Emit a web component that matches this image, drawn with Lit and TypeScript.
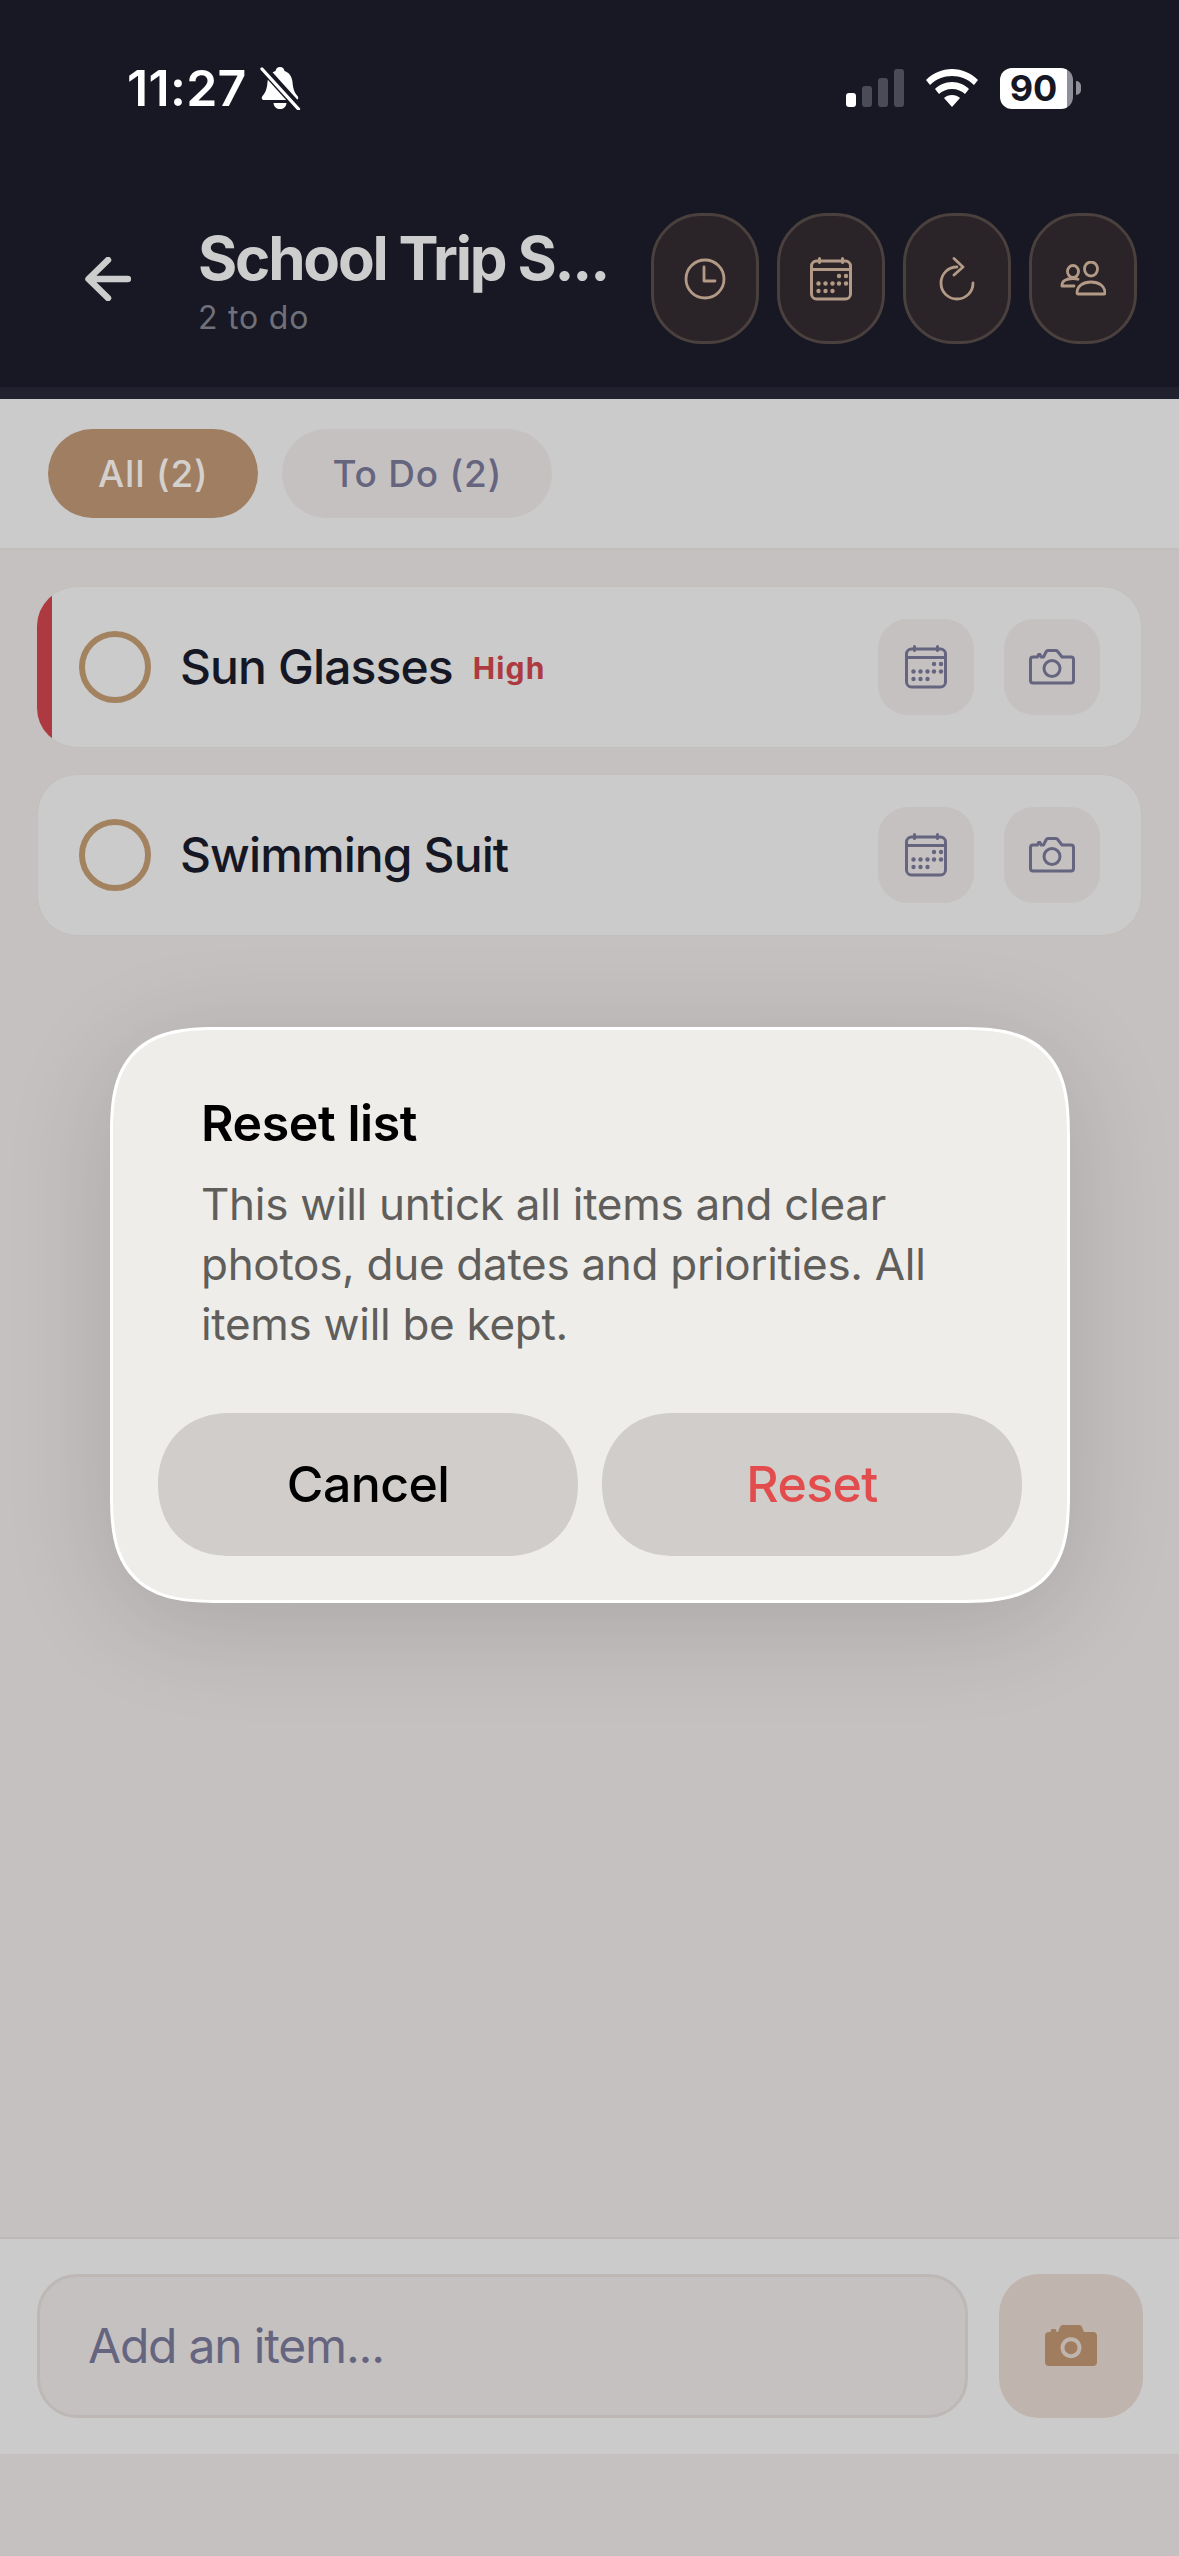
import { LitElement, html, css, svg } from "lit";
import { customElement } from "lit/decorators.js";

const calendar = (c: string) => html`<svg class="ic-cal" viewBox="0 0 42 44" fill="none" stroke=${c} stroke-width="3" stroke-linecap="round">
  <path d="M9.500 1.500v4M32.500 1.500v4"/>
  <rect x="1.500" y="4" width="39" height="38" rx="5"/>
  <path d="M1.500 12.500h39"/>
  ${[[29,19],[36,19],[8.500,26.500],[15.500,26.500],[22.500,26.500],[29,26.500],[36,26.500],[8.500,34],[15.500,34],[22.500,34]].map(([x,y]) => svg`<circle cx=${x} cy=${y} r="2.200" fill=${c} stroke="none"/>`)}
</svg>`;

const camera = (c: string) => html`<svg class="ic-cam" viewBox="0 0 46 36" fill="none" stroke=${c} stroke-width="3" stroke-linejoin="round" stroke-linecap="round">
  <path d="M4 8h4.500l1-2.500h1.500l1 2.500h2.500l2.800-5.500q.5-1 1.700-1h8q1.200 0 1.700 1L33 8h9q2.500 0 2.500 2.500v21q0 2.500-2.500 2.500H4q-2.500 0-2.500-2.500v-21Q1.500 8 4 8z"/>
  <circle cx="23" cy="19.500" r="8"/>
</svg>`;

@customElement("app-root")
export class AppRoot extends LitElement {
  static styles = css`
    :host { display: block; font-family: Inter, "Noto Sans", sans-serif; }
    * { box-sizing: border-box; }
    .app { position: relative; width: 1179px; height: 2556px; background: #c5c1c0; display: flex; flex-direction: column; overflow: hidden; }

    .header { background: #171823; height: 399px; border-bottom: 12px solid #20202e; flex: none; }
    .status { height: 213px; padding: 62px 98px 0 127px; display: flex; align-items: flex-start; }
    .time { color: #fff; font-size: 50px; font-weight: 600; line-height: 52px; letter-spacing: .3px; }
    .bell { width: 42px; height: 44px; margin: 4px 0 0 12px; }
    .right { margin-left: auto; display: flex; align-items: center; height: 52px; }
    .signal { width: 58px; height: 38px; }
    .wifi { width: 52px; height: 38px; margin-left: 22px; }
    .batt { position: relative; width: 73px; height: 41px; margin-left: 22px; border-radius: 12px; background: linear-gradient(90deg, #fff 0 67px, #8f8f99 67px); color: #161724; font-size: 36px; font-weight: 700; line-height: 41px; text-align: center; padding-right: 6px; }
    .nub { width: 5px; height: 14px; background: #8f8f99; border-radius: 0 7px 7px 0; margin-left: 3px; }

    .bar { height: 131px; display: flex; align-items: center; padding-right: 42px; }
    .back { width: 198px; flex: none; padding-left: 85px; display: flex; }
    .back svg { width: 46px; height: 44px; }
    .titles { flex: 1; min-width: 0; margin-top: 3px; }
    .title { color: #cdcdcd; font-size: 60px; font-weight: 700; line-height: 70px; letter-spacing: -2.200px; white-space: nowrap; }
    .sub { color: #6f7079; font-size: 32px; line-height: 40px; letter-spacing: .8px; margin-top: 5px; }
    .hbtns { display: flex; gap: 18px; flex: none; }
    .hbtn { width: 108px; height: 131px; border-radius: 50px; background: #2a2428; border: 3px solid #4a403d; display: flex; align-items: center; justify-content: center; }
    .hbtn svg { display: block; }
    .ic-clock { width: 42px; height: 42px; }
    .hbtn .ic-cal { width: 42px; height: 44px; }
    .ic-redo { width: 36px; height: 44px; }
    .ic-people { width: 46px; height: 36px; }

    .filters { flex: none; height: 151px; background: #cbcbcb; border-bottom: 2px solid #c3bfbe; padding: 30px 48px 0; display: flex; gap: 24px; align-items: flex-start; }
    .chip { height: 89px; border-radius: 45px; font-size: 37px; font-weight: 500; line-height: 89px; letter-spacing: .8px; padding: 0 50px; background: #c5c1c0; color: #666580; }
    .chip.on { background: #a07e61; color: #d4d0cd; }

    .list { flex: 1; padding: 36px 37px 0; display: flex; flex-direction: column; gap: 26px; }
    .card { height: 162px; background: #cbcbcb; border: 1px solid #c2bfbd; border-radius: 40px; display: flex; align-items: center; padding: 0 41px; overflow: hidden; }
    .card.high { border-left: 0; padding-left: 0; }
    .strip { width: 15px; align-self: stretch; margin: -1px 27px -1px 0; background: #ad3a40; flex: none; }
    .circle { width: 72px; height: 72px; border: 6px solid #a3825f; border-radius: 50%; flex: none; }
    .name { color: #161724; font-size: 48px; font-weight: 500; line-height: 60px; margin-left: 29px; letter-spacing: -.9px; }
    .prio { color: #ad3a40; font-size: 30px; font-weight: 700; letter-spacing: 1.200px; margin-left: 20px; margin-top: 2px; }
    .acts { margin-left: auto; display: flex; gap: 30px; }
    .act { width: 96px; height: 96px; border-radius: 30px; background: #c5c1c0; display: flex; align-items: center; justify-content: center; }
    .act .ic-cal { width: 42px; height: 44px; }
    .ic-cam { width: 46px; height: 36px; }

    .composer { flex: none; height: 217px; background: #cbcbcb; border-top: 2px solid #bdb9b7; padding: 35px 36px 0 37px; display: flex; justify-content: space-between; }
    .input { width: 931px; height: 144px; background: #c5c1c0; border: 3px solid #bdb8b5; border-radius: 40px; color: #666580; font-size: 48px; line-height: 138px; padding-left: 48px; letter-spacing: -1.200px; }
    .cbtn { width: 144px; height: 144px; border-radius: 40px; background: #c0b5ae; display: flex; align-items: center; justify-content: center; }
    .cbtn svg { width: 54px; height: 42px; }
    .foot { flex: none; height: 102px; }

    .dialog { position: absolute; left: 110px; top: 1027px; width: 960px; height: 576px; background: #eeedea; border: 3px solid #fff; border-radius: 110px; corner-shape: superellipse(1.5); padding: 64px 45px 0; box-shadow: 0 20px 110px rgba(0,0,0,.14); }
    .dtitle { color: #000; font-size: 50px; font-weight: 600; line-height: 58px; letter-spacing: -.4px; padding-left: 43px; }
    .dbody { color: #5f5e5b; font-size: 44px; line-height: 60px; padding-left: 43px; margin-top: 22px; letter-spacing: -.3px; }
    .dbtns { display: flex; gap: 24px; margin-top: 59px; }
    .dbtn { width: 420px; height: 143px; border-radius: 72px; corner-shape: superellipse(1.1); background: #d0cdca; color: #000; font-size: 50px; font-weight: 500; line-height: 143px; text-align: center; letter-spacing: -.6px; }
    .dbtn.red { color: #e34c4c; }
  `;

  private item(name: string, high: boolean) {
    return html`<div class="card ${high ? "high" : ""}">
      ${high ? html`<div class="strip"></div>` : ""}
      <div class="circle"></div>
      <div class="name">${name}</div>
      ${high ? html`<div class="prio">High</div>` : ""}
      <div class="acts">
        <div class="act">${calendar("#666580")}</div>
        <div class="act">${camera("#666580")}</div>
      </div>
    </div>`;
  }

  render() {
    const tan = "#b39a86";
    return html`<div class="app">
      <div class="header">
        <div class="status">
          <div class="time">11:27</div>
          <svg class="bell" viewBox="0 0 42 44">
            <path fill="#fff" d="M21 1c2.500 0 4 1.500 4.500 4 5 1.500 7.500 6 8 11 .5 6 1.500 10 5 14 1.500 2 .5 4-1.500 4H5c-2 0-3-2-1.500-4 3.500-4 4.500-8 5-14 .5-5 3-9.500 8-11 .5-2.500 2-4 4.500-4z"/>
            <path fill="#fff" d="M14.500 37h13c-.5 4-3 6-6.500 6s-6-2-6.500-6z"/>
            <path d="M3 1l38 42" stroke="#171823" stroke-width="8.500"/>
            <path d="M3 3l36.500 40" stroke="#fff" stroke-width="3.300" stroke-linecap="round"/>
          </svg>
          <div class="right">
            <svg class="signal" viewBox="0 0 58 38">
              <rect x="0" y="24" width="10" height="14" rx="3" fill="#fff"/>
              <rect x="16" y="17" width="10" height="21" rx="3" fill="#4b4b58"/>
              <rect x="32" y="9" width="10" height="29" rx="3" fill="#4b4b58"/>
              <rect x="48" y="0" width="10" height="38" rx="3" fill="#4b4b58"/>
            </svg>
            <svg class="wifi" viewBox="0 0 52 38" fill="#fff">
              <path d="M26 0c10 0 19 4 26 11l-4 5C42 10 34 7 26 7S10 10 4 16l-4-5C7 4 16 0 26 0z"/>
              <path d="M26 13c7 0 13 3 17 7l-4 5c-3-3-8-5-13-5s-10 2-13 5l-4-5c4-4 10-7 17-7z"/>
              <path d="M26 26c3 0 6 1 8 3l-8 9-8-9c2-2 5-3 8-3z"/>
            </svg>
            <div class="batt">90</div><div class="nub"></div>
          </div>
        </div>
        <div class="bar">
          <div class="back">
            <svg viewBox="0 0 46 44" fill="none" stroke="#cdcdcd" stroke-width="6.500" stroke-linecap="round" stroke-linejoin="round"><path d="M23 3L3.500 22 23 41M4 22h39"/></svg>
          </div>
          <div class="titles">
            <div class="title">School Trip S...</div>
            <div class="sub">2 to do</div>
          </div>
          <div class="hbtns">
            <div class="hbtn">
              <svg class="ic-clock" viewBox="0 0 42 42" fill="none" stroke=${tan} stroke-width="2.800" stroke-linecap="round" stroke-linejoin="round"><circle cx="21" cy="21" r="19"/><path d="M20 9v14h11"/></svg>
            </div>
            <div class="hbtn">${calendar(tan)}</div>
            <div class="hbtn">
              <svg class="ic-redo" viewBox="0 0 36 44" fill="none" stroke=${tan} stroke-width="2.800" stroke-linecap="round" stroke-linejoin="round"><path d="M18 10C9 10 2 17 2 26s7 16 16 16 16-7 16-16"/><path d="M15 1.500l9 8.500-9 8"/></svg>
            </div>
            <div class="hbtn">
              <svg class="ic-people" viewBox="0 0 46 36" fill="none" stroke=${tan} stroke-width="2.800" stroke-linecap="round" stroke-linejoin="round">
                <ellipse cx="13" cy="10.500" rx="5.500" ry="6"/><ellipse cx="31" cy="8" rx="6.500" ry="7"/>
                <path d="M14 25H2c-.5-5 4-7.500 11-7.500 2 0 4 .2 5 .7"/>
                <path d="M17 32c0-7 6-11 14-11s14 4 14 11c0 .7-.5 1-1 1H18c-.5 0-1-.3-1-1z"/>
              </svg>
            </div>
          </div>
        </div>
      </div>
      <div class="filters">
        <div class="chip on">All (2)</div>
        <div class="chip">To Do (2)</div>
      </div>
      <div class="list">
        ${this.item("Sun Glasses", true)}
        ${this.item("Swimming Suit", false)}
      </div>
      <div class="composer">
        <div class="input">Add an item...</div>
        <div class="cbtn">
          <svg viewBox="0 0 54 42"><path fill="#a07d5e" fill-rule="evenodd" d="M5 7h1.500l.5-2q.3-1 1.300-1h2.500q1 0 1.300 1l.5 2H14l2-5q.8-2 2.800-2h16.400q2 0 2.800 2l2 5h9q4 0 4 4v26q0 4-4 4H5q-4 0-4-4V11q0-4 4-4zM27 12.200a10.500 10.500 0 1 0 .01 0zM27 16.200a6.500 6.500 0 1 1-.01 0z"/></svg>
        </div>
      </div>
      <div class="foot"></div>
      <div class="dialog">
        <div class="dtitle">Reset list</div>
        <div class="dbody">This will untick all items and clear<br>photos, due dates and priorities. All<br>items will be kept.</div>
        <div class="dbtns">
          <div class="dbtn">Cancel</div>
          <div class="dbtn red">Reset</div>
        </div>
      </div>
    </div>`;
  }
}
